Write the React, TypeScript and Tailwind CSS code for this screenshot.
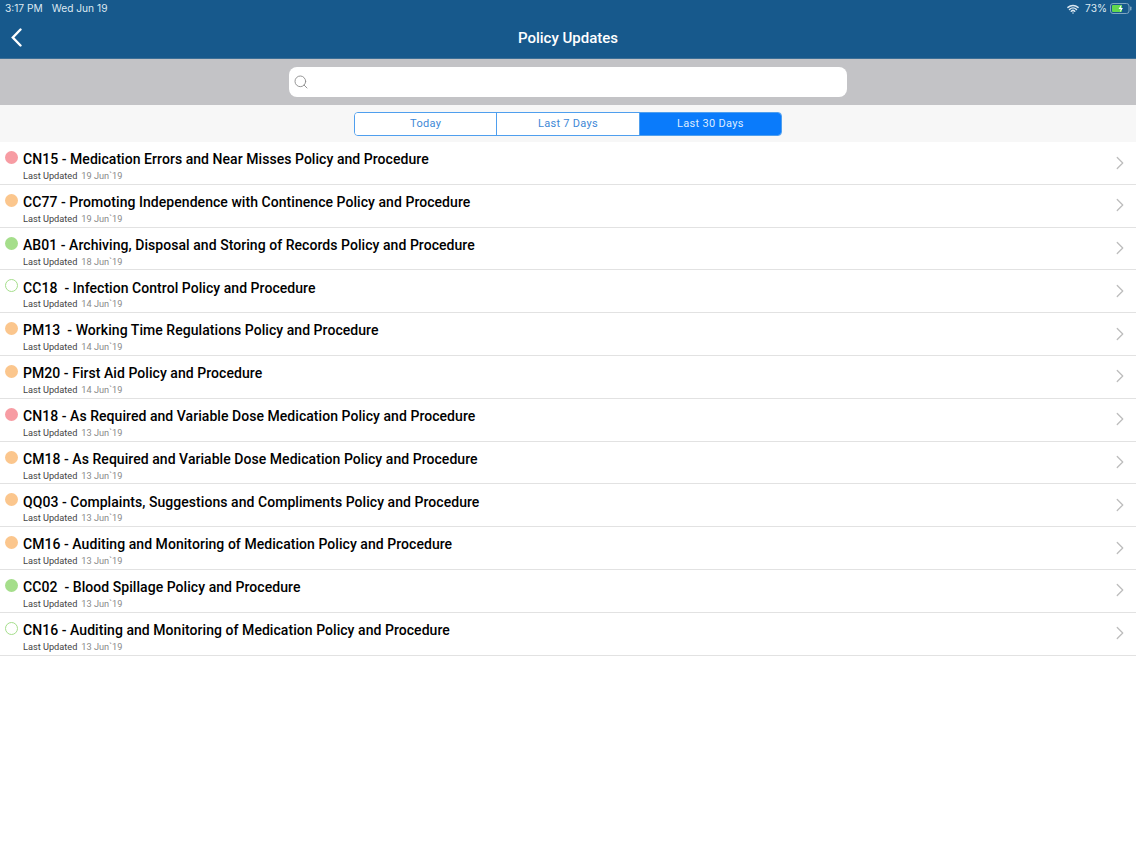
import { Search, ChevronRight, Wifi } from 'lucide-react';

type Policy = { title: string; date: string; dot: string };

const POLICIES: Policy[] = [
  { title: 'CN15 - Medication Errors and Near Misses Policy and Procedure', date: '19 Jun`19', dot: 'bg-[#f79ca3]' },
  { title: 'CC77 - Promoting Independence with Continence Policy and Procedure', date: '19 Jun`19', dot: 'bg-[#fbc68d]' },
  { title: 'AB01 - Archiving, Disposal and Storing of Records Policy and Procedure', date: '18 Jun`19', dot: 'bg-[#a5de8b]' },
  { title: 'CC18  - Infection Control Policy and Procedure', date: '14 Jun`19', dot: 'border border-[#a5de8b] bg-white' },
  { title: 'PM13  - Working Time Regulations Policy and Procedure', date: '14 Jun`19', dot: 'bg-[#fbc68d]' },
  { title: 'PM20 - First Aid Policy and Procedure', date: '14 Jun`19', dot: 'bg-[#fbc68d]' },
  { title: 'CN18 - As Required and Variable Dose Medication Policy and Procedure', date: '13 Jun`19', dot: 'bg-[#f79ca3]' },
  { title: 'CM18 - As Required and Variable Dose Medication Policy and Procedure', date: '13 Jun`19', dot: 'bg-[#fbc68d]' },
  { title: 'QQ03 - Complaints, Suggestions and Compliments Policy and Procedure', date: '13 Jun`19', dot: 'bg-[#fbc68d]' },
  { title: 'CM16 - Auditing and Monitoring of Medication Policy and Procedure', date: '13 Jun`19', dot: 'bg-[#fbc68d]' },
  { title: 'CC02  - Blood Spillage Policy and Procedure', date: '13 Jun`19', dot: 'bg-[#a5de8b]' },
  { title: 'CN16 - Auditing and Monitoring of Medication Policy and Procedure', date: '13 Jun`19', dot: 'border border-[#a5de8b] bg-white' },
];

function Battery() {
  return (
    <svg width="22" height="11" viewBox="0 0 22 11" fill="none">
      <rect x="0.5" y="0.5" width="18.5" height="10" rx="2.5" stroke="#7fa6c0" />
      <rect x="2" y="2" width="10" height="7" rx="1" fill="#62d84e" />
      <rect x="20" y="3.5" width="1.5" height="4" rx="0.7" fill="#7fa6c0" />
      <path d="M11.5 1.5 8.5 6h2.3l-1 3.6L13 5h-2.3z" fill="#fff" />
    </svg>
  );
}

function PolicyRow({ policy }: { policy: Policy }) {
  return (
    <div className="flex h-[42.8px] items-start border-b border-[#e2e2e2] bg-white pl-[5px] pr-[5px]">
      <span className={`mt-[9px] h-[13px] w-[13px] shrink-0 rounded-full ${policy.dot}`} />
      <div className="ml-[5px] flex-1 whitespace-pre">
        <div className="mt-[7.2px] text-[14px] leading-[20px] font-medium tracking-[0.05px] text-black">{policy.title}</div>
        <div className="mt-[0.8px] flex text-[9.2px] leading-[12px]">
          <span className="text-[#444444]">Last Updated</span>
          <span className="ml-[4px] text-[#8a8a8a]">{policy.date}</span>
        </div>
      </div>
      <ChevronRight className="mt-[9.5px] h-[22px] w-[22px] text-[#bdbdbd]" strokeWidth={1.4} />
    </div>
  );
}

export default function App() {
  return (
    <div className="flex min-h-[852px] flex-col bg-white font-['Roboto',sans-serif]">
      <header className="h-[59px] border-b border-[#3d6f96] bg-[#17598c] text-white">
        <div className="flex h-[17px] items-center justify-between pt-[1px] pl-[5px] pr-[4px] text-[10.2px] text-[#dce8f1]">
          <div className="flex gap-[9px] font-['Inter',sans-serif]">
            <span>3:17 PM</span>
            <span>Wed Jun 19</span>
          </div>
          <div className="flex items-center gap-[3px] font-['Inter',sans-serif]">
            <Wifi className="mr-[3px] h-[12px] w-[12px]" strokeWidth={3} />
            <span>73%</span>
            <Battery />
          </div>
        </div>
        <div className="flex h-[41px] items-center">
          <div className="w-[100px] pl-[11px]">
            <svg width="11" height="19" viewBox="0 0 11 19" fill="none" stroke="white" strokeWidth="2.4" strokeLinecap="round">
              <path d="M9.5 1.5 1.8 9.5l7.7 8" />
            </svg>
          </div>
          <h1 className="flex-1 pt-[1px] text-center text-[15px] font-medium">Policy Updates</h1>
          <div className="w-[100px]" />
        </div>
      </header>

      <div className="flex h-[46px] items-center justify-center bg-[#c3c3c6]">
        <div className="flex h-[30px] w-[558px] items-center rounded-[8px] bg-white pl-[4px]">
          <Search className="h-[16px] w-[16px] text-[#8e8e8e]" strokeWidth={1.4} />
        </div>
      </div>

      <div className="flex h-[37px] items-center justify-center bg-[#f7f7f7]">
        <div className="flex h-[24px] w-[428px] overflow-hidden rounded-[4px] border border-[#4f9fee] text-[11px] tracking-[0.3px]">
          <button className="flex-1 border-r border-[#4f9fee] bg-white pt-[1px] text-[#4088d6]">Today</button>
          <button className="flex-1 border-r border-[#4f9fee] bg-white pt-[1px] text-[#4088d6]">Last 7 Days</button>
          <button className="flex-1 bg-[#0a7bfb] pt-[1px] text-[#dcecff]">Last 30 Days</button>
        </div>
      </div>

      <div className="flex flex-col">
        {POLICIES.map((policy) => (
          <PolicyRow key={policy.title} policy={policy} />
        ))}
      </div>
    </div>
  );
}
